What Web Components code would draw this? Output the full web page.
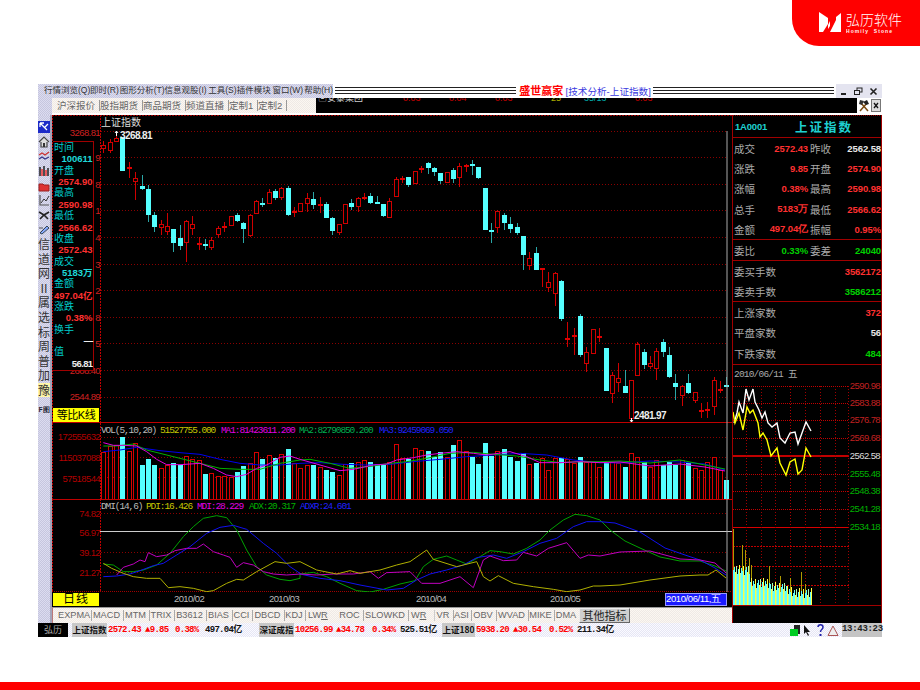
<!DOCTYPE html>
<html lang="zh"><head><meta charset="utf-8"><title>盛世赢家</title>
<style>html,body{margin:0;padding:0;background:#fff}</style></head>
<body>
<app-slide>
  <hs-logo slot="logo"></hs-logo>
  <hs-window slot="window"></hs-window>
</app-slide>
<script>
const CJK='"Liberation Sans","Noto Sans CJK SC",sans-serif';
const DITHER='repeating-conic-gradient(#dcdcf0 0 25%,#c6c6de 0 50%) 0 0/2px 2px';
const CREAM='repeating-conic-gradient(#fbf7f1 0 25%,#efe9e6 0 50%) 0 0/2px 2px';
const PALE='repeating-conic-gradient(#fafaff 0 25%,#e6e6f4 0 50%) 0 0/2px 2px';
function def(name,css,html,init){
  customElements.define(name,class extends HTMLElement{
    constructor(){super();const r=this.attachShadow({mode:'open'});r.innerHTML='<style>'+css+'</style>'+html;if(init)init(r,this);}
  });
}
/* ---------- data ---------- */
const CX=i=>103.4+6.356*i;
const C=[[141,145,148,153,'r'],[139,142,150,153,'r'],[131,138,141,141,'r'],[137,137,171,171,'c'],[162,167,169,178,'r'],[172,178,181,200,'r'],[175,186,189,190,'c'],[185,189,215,222,'c'],[212,215,227,232,'c'],[220,224,227,235,'r'],[213,226,231,235,'r'],[229,229,243,252,'c'],[225,238,246,250,'c'],[220,221,242,262,'r'],[216,224,228,235,'r'],[237,243,245,250,'r'],[239,244,245,250,'c'],[237,240,247,250,'r'],[226,228,234,238,'r'],[222,226,227,232,'r'],[216,216,225,225,'r'],[213,215,221,222,'c'],[222,223,229,243,'c'],[214,215,235,237,'r'],[200,201,213,214,'r'],[198,203,204,207,'c'],[189,192,203,203,'r'],[189,191,198,200,'c'],[187,188,197,200,'r'],[186,188,215,216,'c'],[207,211,213,217,'r'],[203,203,211,211,'r'],
[193,198,203,212,'r'],[192,199,205,209,'c'],[197,204,205,213,'r'],[202,204,218,218,'c'],[217,218,231,235,'c'],[224,224,232,235,'r'],[204,204,223,223,'r'],[199,203,207,210,'c'],[197,198,206,212,'r'],[193,197,198,200,'r'],[193,196,203,204,'c'],[196,202,203,204,'c'],[204,204,216,217,'c'],[198,201,217,218,'r'],[177,179,196,197,'r'],[176,178,179,183,'r'],[177,177,185,187,'c'],[171,171,183,184,'r'],[166,168,169,173,'r'],[162,163,168,174,'c'],[167,168,172,176,'c'],[173,173,181,184,'c'],[172,172,182,182,'r'],[168,170,179,183,'c'],[163,166,177,187,'r'],[164,165,166,172,'r'],[160,164,166,175,'c'],[167,167,178,179,'c'],[188,188,230,230,'c'],[223,230,231,243,'c'],[210,211,227,233,'r'],[213,215,223,230,'c'],[217,224,229,233,'c'],[223,227,233,235,'c'],[236,236,255,270,'c'],[252,258,265,270,'r'],[247,253,270,270,'c'],[268,268,270,287,'r'],[272,282,287,292,'r'],[272,273,293,306,'r'],[280,281,319,321,'c'],[322,338,339,347,'r'],[328,335,337,355,'r'],[314,316,355,357,'c'],[347,352,363,372,'r'],[329,329,353,353,'r'],[328,336,337,342,'r'],[348,348,391,391,'c'],[372,375,393,403,'r'],[363,378,382,392,'r'],[370,386,393,393,'c'],[380,380,418,418,'r'],[342,344,375,375,'r'],[349,352,365,369,'c'],[356,363,366,369,'r'],[348,351,368,380,'r'],[339,342,352,357,'c'],[347,355,377,378,'c'],[374,383,387,400,'c'],[385,386,395,406,'r'],[374,383,393,394,'c'],[392,392,400,403,'r'],[403,410,412,418,'r'],[402,409,411,418,'r'],[377,380,406,415,'r'],[381,389,390,393,'r'],[377,385,386,386,'c']];
const V=[95,78,75,52,92,68,135,118,135,143,135,128,135,108,118,120,163,160,168,168,172,155,138,130,95,118,105,115,103,88,130,143,135,135,140,150,155,165,133,130,125,120,127,132,132,125,72,115,118,83,90,92,112,97,112,76,61,93,110,132,70,108,93,88,110,122,100,132,130,115,150,115,113,118,130,110,125,125,142,130,125,130,140,100,110,125,140,120,135,125,135,120,130,145,150,125,110,150,180];
const pts=(a,b,tail)=>{const o=[];for(let i=0;i<a.length;i+=2)o.push((a[i]/3)+','+(420+a[i+1]/3));for(let i=0;i<b.length;i+=2)o.push((300+b[i]/3)+','+(420+b[i+1]/3));return o.join(' ')+' '+(tail||'');};
const t=(x,y,s,fill,o={})=>`<text x="${x}" y="${y}" fill="${fill}" text-anchor="${o.a||'start'}" class="${o.c||'s'}">${s}</text>`;
const grid=(ys,x1,x2,col='#8a0000')=>ys.map(y=>`<line x1="${x1}" x2="${x2}" y1="${y}" y2="${y}" stroke="${col}" stroke-dasharray="1 2" shape-rendering="crispEdges"/>`).join('');
const SVGCSS=`svg{display:block;overflow:visible}text{font-family:${CJK}}.s{font-size:9.5px;letter-spacing:-.6px}.m{font-family:"Liberation Mono",monospace;font-size:9.5px;letter-spacing:-1.1px}.w{font-size:10px;font-weight:bold;letter-spacing:-.6px}.z{font-size:10px}`;
/* ---------- shell ---------- */
def('app-slide',`:host{display:flex;flex-direction:column;width:920px;height:690px;background:#fff;overflow:hidden}
 .top{display:flex;justify-content:flex-end;height:46px}.mid{padding:38px 0 0 38px;flex:1}.foot{height:8px;background:#ff0000}`,
 `<div class="top"><slot name="logo"></slot></div><div class="mid"><slot name="window"></slot></div><div class="foot"></div>`);
def('hs-logo',`:host{display:block;width:128px;height:46px;background:#ff0000;border-bottom-left-radius:27px;color:#fff;position:relative}
 .box{display:flex;align-items:flex-start;gap:5px;padding:12px 0 0 27px}
 .n{font:14px/14px "Noto Sans CJK SC",sans-serif;letter-spacing:0;white-space:nowrap;font-weight:300}
 .e{font:bold 5px/6px "Liberation Sans",sans-serif;letter-spacing:1.05px;white-space:pre;margin-top:2px;opacity:.95}`,
 `<div class="box"><svg width="22" height="20" viewBox="0 0 22 20"><polygon fill="#fff" points="0,0 9,6 9,12 4,20 0,20"/><polygon fill="#fff" points="22,1 22,20 11,20 17,8 17,5"/><polygon fill="#fff" points="11,9 11,14 9,17 9,13"/></svg><div><div class="n">弘历软件</div><div class="e">Homily  Stone</div></div></div>`);
def('hs-window',`:host{display:block;width:844px;height:553px;font-family:${CJK}}
 .main{display:grid;grid-template-columns:14px 680px 150px;height:508px}
 .center{display:flex;flex-direction:column;min-width:0}`,
 `<hs-titlebar></hs-titlebar><hs-quicktabs></hs-quicktabs>
  <div class="main"><hs-rail></hs-rail><div class="center"><kline-panel></kline-panel><vol-panel></vol-panel><dmi-panel></dmi-panel><date-bar></date-bar><index-tabs></index-tabs></div><quote-panel></quote-panel></div>
  <ticker-bar></ticker-bar>`);
def('hs-titlebar',`:host{display:flex;height:14px;align-items:stretch;background:#fff;font-size:8.5px}
 .menu{width:295px;background:${DITHER};display:flex;color:#333;line-height:13px;white-space:nowrap;box-sizing:border-box;padding-left:6px}
 .menu span{display:block}
 .st{flex:1;margin:3px 2px 2px;background:repeating-linear-gradient(#222 0 1.5px,#fff 1.5px 3px)}
 .ti{white-space:nowrap;line-height:14px;padding-left:1px}.ti b{color:#f00;font-size:11px;letter-spacing:0}.ti i{font-style:normal;color:#3a3ae0;font-size:9.6px}
 .btn{width:44px;background:#e4e4f0;display:flex;justify-content:space-around;align-items:center;padding:0 1px}`,
 `<div class="menu"><span style="width:46px">行情浏览(Q)</span><span style="width:30px">即时(R)</span><span style="width:45px">图形分析(T)</span><span style="width:44px">信息观股(I)</span><span style="width:29px">工具(S)</span><span style="width:36px">插件模块</span><span style="width:32px">窗口(W)</span><span>帮助(H)</span></div>
  <div class="st"></div><div class="ti"><b>盛世赢家</b> <i>[技术分析-上证指数]</i></div><div class="st"></div>
  <div class="btn"><svg width="9" height="9"><rect x="1" y="6" width="5" height="2" fill="#222"/></svg><svg width="9" height="9" fill="none" stroke="#222"><rect x="3" y="1" width="5" height="4"/><rect x=".5" y="3.5" width="5" height="4" fill="#e4e4f0"/></svg><svg width="9" height="9" stroke="#222" stroke-width="1.6"><path d="M1.5 1.5 7.5 7.5M7.5 1.5 1.5 7.5"/></svg></div>`);
def('hs-quicktabs',`:host{display:flex;height:17px;background:#fff;box-sizing:border-box;font-size:9.5px}
 .l{width:14px;background:${DITHER}}
 .tabs{width:264px;height:15px;background:${CREAM};color:#666;display:flex;align-items:center;padding-left:5px;box-sizing:border-box;white-space:nowrap}
 .tabs span{display:block;width:38px;padding-right:4px;border-right:1px solid #999;margin-right:0;text-align:center;line-height:11px;box-sizing:content-box}
 .tabs span.n{width:24px}
 .blk{width:541px;height:15px;background:#000;overflow:hidden;display:grid;grid-template-columns:85px 46px 46px 56px 33px 51px 1fr;white-space:nowrap;line-height:11px;margin-top:0;padding-left:2px;box-sizing:border-box}
 .blk span{margin-top:-5px;font-size:9px}
 .ic{flex:1;display:flex;justify-content:space-between;padding:1px 1px 0 1px;height:14px}`,
 `<div class="l"></div><div class="tabs"><span>沪深报价</span><span>股指期货</span><span>商品期货</span><span>频道直播</span><span class="n">定制1</span><span class="n">定制2</span></div>
  <div class="blk"><span style="color:#ccc">▣安泰集团</span><span style="color:#c00">0.03</span><span style="color:#c00">0.04</span><span style="color:#c00">0.03</span><span style="color:#aa0">25</span><span style="color:#0aa">35/13</span><span style="color:#c00">0.03</span></div>
  <div class="ic"><svg width="12" height="13" viewBox="0 0 12 13"><path d="M2 12 9 4" stroke="#7a4a10" stroke-width="1.5"/><path d="M10 12 3 4" stroke="#7a4a10" stroke-width="1.5"/><path d="M5 3 9 1 11 5 8 6Z" fill="#222"/><path d="M1 5 2 1 6 2 4 6Z" fill="#333"/></svg><svg width="10" height="13" viewBox="0 0 10 13"><rect x=".5" y=".5" width="9" height="12" fill="#ddd" stroke="#777"/><path d="M3 4 7 9M7 4 3 9" stroke="#111" stroke-width="1.3"/></svg></div>`);
/* ---------- left rail ---------- */
const RI=[
 `<rect width="12" height="12" fill="#1c2ac8"/><path d="M2 2 9 9M2 2h4M2 2v4M10 3 7 6" stroke="#fff" stroke-width="1.3" fill="none"/>`,
 `<path d="M1 6 6 1 11 6M3 6v5h6V6" stroke="#444" fill="#ddd" stroke-width="1.2"/><rect x="5" y="7" width="2" height="4" fill="#333"/>`,
 `<path d="M1 5 4 3 7 5 11 2" stroke="#c33" stroke-width="1.3" fill="none"/><path d="M1 9 4 7 7 9 11 7" stroke="#338" stroke-width="1.2" fill="none"/>`,
 `<path d="M2 2v9M6 1v10M10 3v8" stroke="#222" stroke-width="1.5"/><path d="M4 4v7M8 5v6" stroke="#e33" stroke-width="1.5"/>`,
 `<path d="M1 4h4l1 1h5v6H1Z" fill="#d33" stroke="#922"/>`,
 `<path d="M2 1v10h9" stroke="#555" fill="none" stroke-width="1.2"/><path d="M3 9 6 5 8 7 11 2" stroke="#333" fill="none"/>`,
 `<path d="M1 3 6 6 11 3M2 10 6 6 10 10" stroke="#222" stroke-width="1.6" fill="none"/>`,
 `<path d="M2 10 9 3 11 5 4 11Z" fill="#8af" stroke="#345"/><path d="M1 5h4" stroke="#555"/>`];
def('hs-rail',`:host{display:block;background:${DITHER};box-sizing:border-box;padding-top:5px;border-right:2px solid #a4a4ba;height:508px}
 div{height:14.6px;width:12px;display:flex;align-items:center;justify-content:center;font-size:12px;line-height:14px;color:#333;font-family:"Noto Sans CJK SC",sans-serif}
 .y{background:#fff6a8}.f{font:bold 7px/14px "Liberation Mono",monospace;margin-top:5px;color:#223}`,
 RI.map(s=>`<div><svg width="12" height="12" viewBox="0 0 12 12">${s}</svg></div>`).join('')+
 ['信','道','网','II','属','选','标','周','普','加'].map(c=>`<div>${c}</div>`).join('')+`<div class="y">豫</div><div class="f">F图</div>`);
/* ---------- chart panels ---------- */
function candles(){
 let s='';C.forEach((c,i)=>{const x=Math.round(CX(i));const red=c[4]=='r';
  s+=`<line x1="${x+.5}" x2="${x+.5}" y1="${c[0]}" y2="${c[3]}" stroke="${red?'#d00000':'#2aa6a6'}"/>`;
  if(red){ if(c[2]-c[1]<=2) s+=`<rect x="${x-2}" y="${c[1]}" width="5" height="2" fill="#e00000"/>`;
    else s+=`<rect x="${x-1.5}" y="${c[1]+.5}" width="4" height="${c[2]-c[1]}" fill="#000" stroke="#d00000"/>`;}
  else s+=`<rect x="${x-2}" y="${c[1]}" width="5" height="${Math.max(2,c[2]-c[1])}" fill="#55ffff"/>`;
 });return s;}
const KY=[131,157.6,184.2,210.8,237.4,264,290.6,317.2,343.8,370.4,397];
def('kline-panel',`:host{display:block;position:relative;width:680px;height:308px;background:#000}${SVGCSS}
 .info{position:absolute;left:1px;top:26px;width:40px;height:228px;background:#000;border:1px solid #a00000;border-left:0;box-sizing:content-box;display:grid;grid-auto-rows:11.36px;font-size:10px;line-height:11px;color:#0cc}
 .info span{white-space:nowrap;padding-left:1px}.info .v{text-align:right;color:#ff3030;font-size:9.5px;font-weight:bold;padding-right:1px}
 .info .c{color:#1fd8d8}.info .w{color:#eee}
 .k{position:absolute;left:1px;bottom:1px;width:46px;height:14px;background:#ffff00;color:#000;font-size:11px;line-height:14px;text-align:center;letter-spacing:-.5px;box-shadow:inset 0 0 0 1px #ff0}`,
 `<svg width="680" height="308" viewBox="52 115 680 308">
  <line x1="100.5" x2="100.5" y1="115" y2="423" stroke="#c00000" stroke-dasharray="2 1" shape-rendering="crispEdges"/>
  <line x1="52.5" x2="52.5" y1="115" y2="423" stroke="#c00000" stroke-dasharray="2 1" shape-rendering="crispEdges"/>
  <line x1="52" x2="732" y1="115.5" y2="115.5" stroke="#a00000" stroke-dasharray="2 1" shape-rendering="crispEdges"/>
  <line x1="52" x2="732" y1="422.5" y2="422.5" stroke="#c00000" shape-rendering="crispEdges"/>
  ${grid(KY,101,727)}
  <g shape-rendering="crispEdges">${candles()}</g>
  ${t(101,126,'上证指数','#ddd',{c:'z'})}
  ${t(120,139,'3268.81','#eee',{c:'w'})}<path d="M116.5 131v5M115 133l1.5-2 1.5 2" stroke="#fff" fill="none"/>
  ${t(634,419,'2481.97','#eee',{c:'w'})}<path d="M631.5 422v-4M630 420l1.5 2 1.500-2" stroke="#fff" fill="none"/>
  ${t(100,136,'3268.81','#d02020',{a:'end'})}${t(100,400,'2544.89','#d02020',{a:'end'})}${t(100,374,'2608.40','#d02020',{a:'end'})}
  ${[[161,'9'],[188,'8'],[214,'1'],[241,'4'],[268,'3'],[294,'2'],[321,'8'],[347,'5']].map(a=>t(100,a[0],a[1],'#d02020',{a:'end'})).join('')}
  <line x1="727" x2="727" y1="131" y2="423" stroke="#aaa"/>
 </svg>
 <div class="info"><span>时间</span><span class="v c">100611</span><span>开盘</span><span class="v">2574.90</span><span>最高</span><span class="v">2590.98</span><span>最低</span><span class="v">2566.62</span><span>收盘</span><span class="v">2572.43</span><span>成交</span><span class="v c">5183万</span><span>金额</span><span class="v">497.04亿</span><span>涨跌</span><span class="v">0.38%</span><span>换手</span><span class="v w">—</span><span>值</span><span class="v w">56.81</span></div>
 <div class="k">等比K线</div>`);
function volBars(){let s='';V.forEach((v,i)=>{const y=Math.round(420+v/3),x=Math.round(CX(i));
 s+=C[i][4]=='c'?`<rect x="${x-2}" y="${y}" width="5" height="${499-y}" fill="#55ffff"/>`:`<rect x="${x-1.5}" y="${y+.5}" width="4" height="${499-y}" fill="#000" stroke="#d80000"/>`;});return s;}
def('vol-panel',`:host{display:block;width:680px;height:76px;background:#000}${SVGCSS}`,
 `<svg width="680" height="76" viewBox="52 423 680 76">
  <line x1="100.5" x2="100.5" y1="423" y2="499" stroke="#c00000" stroke-dasharray="2 1" shape-rendering="crispEdges"/><line x1="52.5" x2="52.5" y1="423" y2="499" stroke="#c00000" stroke-dasharray="2 1" shape-rendering="crispEdges"/>
  ${grid([437,457,477],101,727)}
  <g shape-rendering="crispEdges">${volBars()}</g>
  <polyline fill="none" stroke="#0000ee" points="${pts([310,95,360,90,410,82,480,92,540,98,600,103,660,118,720,130,780,135,840,135,900,130],[60,128,130,133,200,135,270,133,340,125,420,118,500,110,580,105,660,100,740,105,820,120,900,128],'620,463 650,461 680,462 705,464 725,470')}"/>
  <polyline fill="none" stroke="#00b000" points="${pts([310,78,350,78,400,72,440,90,480,100,540,115,600,130,660,145,720,148,780,148,840,130,900,120],[30,118,90,130,150,145,220,138,270,130,320,125,380,115,450,100,520,97,580,103,650,108,720,120,780,128,840,125,900,125],'620,461 650,463 680,460 705,465 725,469')}"/>
  <polyline fill="none" stroke="#e000e0" points="${pts([310,68,340,76,370,76,410,78,440,95,470,118,500,134,540,134,600,130,640,145,680,165,710,170,740,163,770,145,800,135,840,112,870,108,900,118],[0,118,60,135,120,152,160,148,220,135,260,132,290,120,340,113,380,105,420,100,470,95,520,100,560,105,630,95,680,110,720,128,780,128,840,125,900,128],'620,462 650,466 680,464 705,467 725,471')}"/>
  <line x1="727" x2="727" y1="423" y2="499" stroke="#aaa"/>
  <rect x="724" y="480" width="5" height="19" fill="#55ffff"/><line x1="726.500" x2="726.500" y1="480" y2="499" stroke="#8ab"/>
  ${t(100,440,'172555632','#b00000',{a:'end'})}${t(100,461,'115037088','#b00000',{a:'end'})}${t(100,482,'57518544','#b00000',{a:'end'})}
  ${t(101,433,'VOL(5,10,20)','#bbb',{c:'m'})}${t(160,433,'51527755.000','#c8c800',{c:'m'})}${t(221,433,'MA1:81423611.200','#e000e0',{c:'m'})}${t(299,433,'MA2:82790850.200','#00b050',{c:'m'})}${t(379,433,'MA3:92459069.050','#2020ff',{c:'m'})}
 </svg>`);
def('dmi-panel',`:host{display:block;width:680px;height:93px;background:#000}${SVGCSS}`,
 `<svg width="680" height="93" viewBox="52 499 680 93">
  <line x1="52" x2="732" y1="499.5" y2="499.500" stroke="#c00000" shape-rendering="crispEdges"/>
  <line x1="100.5" x2="100.5" y1="499" y2="592" stroke="#c00000" stroke-dasharray="2 1" shape-rendering="crispEdges"/><line x1="52.5" x2="52.5" y1="499" y2="592" stroke="#c00000" stroke-dasharray="2 1" shape-rendering="crispEdges"/>
  ${grid([513.500,552.500,572.500],101,727)}
  <line x1="52" x2="732" y1="591.5" y2="591.5" stroke="#a00000" stroke-dasharray="1 1" shape-rendering="crispEdges"/>
  <line x1="100" x2="732" y1="531.5" y2="531.5" stroke="#ccc" shape-rendering="crispEdges"/>
  <polyline fill="none" stroke="#00a000" points="${pts([310,432,340,435,370,455,400,455,430,450,470,435,510,400,550,350,580,320,610,295,650,287,680,293,710,330,740,390,770,440,800,465,840,478,870,482,900,475],[0,462,40,457,80,470,120,490,170,512,210,516,250,508,300,492,345,482,370,440,400,418,440,408,470,420,500,432,540,410,570,392,600,395,640,402,680,385,720,360,750,330,790,300,825,283,860,287,900,300],'610,530 625,541 640,548 660,557 680,561 700,561 715,566 726,571')}"/>
  <polyline fill="none" stroke="#1010f0" points="${pts([310,470,350,468,390,462,420,452,460,437,490,430,530,405,570,380,620,340,660,322,700,316,740,328,790,370,830,400,870,440,900,460],[0,462,60,475,120,482,180,495,260,510,310,505,350,480,390,462,440,450,490,435,530,413,580,405,620,415,670,395,720,370,770,355,820,320,860,305,900,305],'615,523 640,532 665,548 685,555 700,560 715,568 726,575')}"/>
  <polyline fill="none" stroke="#c000c0" points="${pts([350,465,370,442,400,432,420,420,435,425,445,398,470,410,500,405,525,392,560,385,590,385,610,372,640,395,670,405,690,412,710,442,730,428,760,435,790,455,820,462,860,465,900,462],[0,462,50,465,100,462,160,462,210,455,235,475,260,458,330,455,365,490,420,490,480,470,520,503,550,420,570,408,610,422,650,420,670,397,710,408,745,385,800,368,840,415,865,405,900,408],'620,552 650,551 680,559 700,560 715,563 726,573')}"/>
  <polyline fill="none" stroke="#b0b000" points="${pts([310,430,335,445,370,460,400,470,440,475,480,475,505,503,540,500,580,505,620,515,640,512,680,490,710,478,730,480,770,455,825,425,860,430,900,425],[0,425,50,450,110,462,150,452,180,460,240,450,290,435,330,425,380,390,400,418,470,440,530,425,550,470,570,483,595,467,640,490,700,500,760,508,800,515,840,510,880,498,900,498],'620,585 650,580 680,576 700,575 708,575 716,570 726,578')}"/>
  <line x1="727" x2="727" y1="499" y2="592" stroke="#aaa"/>
  ${t(100,517,'74.82','#b00000',{a:'end'})}${t(100,536,'56.97','#b00000',{a:'end'})}${t(100,556,'39.12','#b00000',{a:'end'})}${t(100,576,'21.27','#b00000',{a:'end'})}
  ${t(101,509,'DMI(14,6)','#bbb',{c:'m'})}${t(146,509,'PDI:16.426','#c8c800',{c:'m'})}${t(197,509,'MDI:28.229','#e000e0',{c:'m'})}${t(249,509,'ADX:20.317','#00b000',{c:'m'})}${t(300,509,'ADXR:24.601','#2020ff',{c:'m'})}
 </svg>`);
def('date-bar',`:host{display:grid;grid-template-columns:48px 1fr;width:680px;height:15px;background:#000;box-sizing:border-box;position:relative}
 .d{display:block;width:46px;height:13px;margin:1px;background:#ff0;color:#000;font-size:12px;line-height:13px;text-align:center;letter-spacing:1px}
 .r{display:grid;grid-template-columns:74px 95px 147px 134px 115px 1fr;color:#bbb;font:9.5px/14px "Liberation Sans",sans-serif;letter-spacing:-.6px;white-space:nowrap}
 .b{background:#1a1aff;color:#fff;height:13px;line-height:12px;margin:1px 0 0;border:0;outline:1px solid #99f;outline-offset:-1px;padding:0 1px;letter-spacing:-.4px;width:62px;box-sizing:border-box}`,
 `<div class="d">日线</div><div class="r"><span></span><span>2010/02</span><span>2010/03</span><span>2010/04</span><span>2010/05</span><span class="b">2010/06/11,五</span></div>`);
def('index-tabs',`:host{display:flex;width:680px;height:16px;background:${CREAM};box-sizing:border-box;font:9.2px/15px "Liberation Sans","Noto Sans CJK SC",sans-serif;color:#666;border-left:1px solid #b77;padding-left:5px;white-space:nowrap;border-top:1px solid #999;align-items:stretch}
 span{display:block;box-sizing:border-box;border-right:1px solid #aaa;height:11px;line-height:11px;margin-top:2px;text-align:center;padding-right:2px}
 u{text-decoration:underline}
 .e{text-align:left;padding-left:2px}
 .o{margin:0;height:15px;line-height:14px;border:1px solid;border-color:#eee #666 #666 #eee;background:#cfcfcf;color:#222;font-size:11px;width:51px;padding:0;text-align:center}`,
 `<span style="width:34px">EXPMA</span><span style="width:32px">MACD</span><span style="width:26px">MTM</span><span style="width:25px">TRIX</span><span style="width:32px">B3612</span><span style="width:26px">BIAS</span><span style="width:20px">CCI</span><span style="width:32px">DBCD</span><span style="width:21px">KDJ</span><span class="e" style="width:32px;border:0">LW<u>R</u></span><span style="width:26px">ROC</span><span style="width:45px">SLOWKD</span><span class="e" style="width:26px;border-right-color:#ccc">W<u>R</u></span><span style="width:19px">VR</span><span style="width:18px">ASI</span><span style="width:25px">OBV</span><span style="width:32px">WVAD</span><span style="width:26px">MIKE</span><span style="width:24px;border:0">DMA</span><span class="o">其他指标</span>`);
/* ---------- right panel ---------- */
def('q-cell',`:host{display:flex;justify-content:space-between;align-items:center;font-size:10.5px;color:#aaa;white-space:nowrap;padding:0 1px}
 b{font:9.5px "Liberation Sans",sans-serif;font-weight:bold;color:var(--c,#eee);letter-spacing:-.1px}`,
 `<slot></slot><b><slot name="v"></slot></b>`);
def('q-sec',`:host{display:grid;grid-template-columns:76px 73px;border-bottom:1px solid #a00000;box-sizing:border-box;align-items:center}:host([wide]){grid-template-columns:149px}`,`<slot></slot>`);
const qc=(l,v,c)=>`<q-cell style="--c:${c}">${l}<span slot="v">${v}</span></q-cell>`;
const UP='#ff3030',DN='#00d000',WH='#e8e8e8';
function miniBars(){let s='';const PK={0:76,9:60,12:55,16:47,18:40,36:39,47:29,57:27,68:33,72:21};
 const jit=[0,3,-2,4,-4,1,5,-3,2,-1,4,-5];
 for(let x=733;x<=811;x++){const k=x-733;
  let h=(k<17?35:k<37?22:k<54?18:k<60?14:12)+jit[k%12];
  if(PK[k])s+=`<rect x="${x}" y="${605-PK[k]}" width="1" height="${PK[k]}" fill="#b09a00"/>`;
  s+=`<rect x="${x}" y="${605-h}" width="1" height="${h}" fill="${k%4<2?'#60ffff':(k%4==2?'#ffff40':'#a8ffb0')}"/>`;}return s;}
const LB=[[389,'2590.98','#c02020'],[406,'2583.88','#c02020'],[423,'2576.78','#c02020'],[441,'2569.68','#c02020'],[459,'2562.58','#ddd'],[477,'2555.48','#00b000'],[494,'2548.38','#00b000'],[512,'2541.28','#00b000'],[530,'2534.18','#00b000']];
def('quote-panel',`:host{display:block;width:150px;height:508px;background:#000;border-left:1px solid #a00000;border-top:1px dotted #a00000;border-right:1px solid #a00000;box-sizing:border-box;position:relative;overflow:hidden}${SVGCSS}
 .h{display:flex;align-items:center;height:22px;border-bottom:1px solid #a00000;box-sizing:border-box;color:#1fd0d0;padding-left:2px}
 .h i{font:9.5px "Liberation Sans",sans-serif;font-weight:bold;letter-spacing:-.2px;width:60px}.h b{font-size:12.500px;letter-spacing:2px;font-weight:bold}
 .dt{color:#aaa;font:9.5px/19px "Liberation Mono","Noto Sans CJK SC",monospace;letter-spacing:-.8px;height:20px;padding-left:1px;white-space:nowrap}
 q-sec.a{height:102px;grid-auto-rows:20.4px}q-sec.b{height:21px}q-sec.c{height:41px;grid-auto-rows:20.5px}q-sec.d{height:63px;grid-auto-rows:20.5px}`,
 `<div class="h"><i>1A0001</i><b>上证指数</b></div>
 <q-sec class="a">${qc('成交','2572.43',UP)}${qc('昨收','2562.58',WH)}${qc('涨跌','9.85',UP)}${qc('开盘','2574.90',UP)}${qc('涨幅','0.38%',UP)}${qc('最高','2590.98',UP)}${qc('总手','5183万',UP)}${qc('最低','2566.62',UP)}${qc('金额','497.04亿',UP)}${qc('振幅','0.95%',UP)}</q-sec>
 <q-sec class="b">${qc('委比','0.33%',DN)}${qc('委差','24040',DN)}</q-sec>
 <q-sec class="c" wide>${qc('委买手数','3562172',UP)}${qc('委卖手数','3586212',DN)}</q-sec>
 <q-sec class="d" wide>${qc('上涨家数','372',UP)}${qc('平盘家数','56',WH)}${qc('下跌家数','484',DN)}</q-sec>
 <div class="dt">2010/06/11 五</div>
 <svg width="148" height="237" viewBox="733 385 148 237">
  ${[386,403,420,438,474,491.500,509,546.500,566,585].map(y=>`<line x1="733" x2="849" y1="${y}" y2="${y}" stroke="#c00000" stroke-dasharray="${y>530?'2 1':'1 1'}" shape-rendering="crispEdges"/>`).join('')}
  <line x1="733" x2="849" y1="455.500" y2="455.500" stroke="#c00000" stroke-width="2" shape-rendering="crispEdges"/>
  <line x1="733" x2="849" y1="527.500" y2="527.500" stroke="#d80000" shape-rendering="crispEdges"/>
  ${[746.500,761.500,775.500,805.500,820.500,835.500,848.500].map(x=>`<line x1="${x}" x2="${x}" y1="386" y2="605" stroke="#a00000" stroke-dasharray="1 2" shape-rendering="crispEdges"/>`).join('')}
  <line x1="790.500" x2="790.500" y1="386" y2="605" stroke="#b00000" stroke-dasharray="1 2" shape-rendering="crispEdges"/>
  <line x1="733" x2="881" y1="605.500" y2="605.500" stroke="#a00000" shape-rendering="crispEdges"/>
  <polyline fill="none" stroke="#fff" stroke-width="1.4" points="734,423 737,413 739,402 743,413 746,389 749,400 753,389 755,402 759,410 762,418 765,412 768,423 772,427 777,423 780,438 785,443 790,433 795,432 798,444 802,433 806,422 811,431"/>
  <polyline fill="none" stroke="#ffff00" stroke-width="1.4" points="733,412 735,423 739,413 743,430 747,407 750,413 753,410 758,423 760,437 763,433 767,440 771,456 777,448 780,463 786,475 790,462 795,459 798,474 802,470 806,448 811,457"/>
  <g shape-rendering="crispEdges">${miniBars()}</g>
  ${LB.map(a=>`<text x="880" y="${a[0]}" fill="${a[2]}" text-anchor="end" class="s">${a[1]}</text>`).join('')}
 </svg>`);
/* ---------- ticker ---------- */
def('ticker-bar',`:host{display:flex;height:14px;background:${PALE};font:bold 9px/13px "Liberation Mono","Noto Sans CJK SC",monospace;letter-spacing:-.7px;white-space:nowrap;align-items:stretch}
 .h{width:30px;background:#000;color:#aaa;font:9px/13px "Noto Sans CJK SC",sans-serif;text-align:center;letter-spacing:0;margin-right:4px}
 .t{background:#c8c8c8;color:#111;font:bold 8.500px/13px "Noto Sans CJK SC",sans-serif;letter-spacing:0;text-align:center}
 .r{color:#f00}.k{color:#111}
 .g{display:grid;align-items:center;margin-left:1px}
 .ic{margin-left:auto;display:flex;align-items:center;gap:1px;padding:0 3px 0 2px}
 .tm{width:40px;background:#c4c4c4;color:#222;text-align:center;letter-spacing:-.3px;font-weight:bold}`,
 (()=>{const g=(n,w,cols,a,b,c,d,ml)=>`<span class="t" style="margin-left:${ml}px;width:${w}px">${n}</span><span class="g" style="grid-template-columns:${cols}"><span class="r">${a}</span><span class="r">▲${b}</span><span class="r">${c}</span><span class="k">${d}</span></span>`;
  return `<span class="h">弘历</span>`+g('上证指数',35,'37px 30px 30px 36px','2572.43','9.85','0.38%','497.04亿',0)+g('深证成指',35,'41px 36px 28px 37px','10256.99','34.78','0.34%','525.51亿',18)+g('上证180',33,'37px 36px 28px 36px','5938.20','30.54','0.52%','211.34亿',5)+
  `<span class="ic"><svg width="14" height="13" viewBox="0 0 14 13"><rect x="6" y="1" width="6" height="9" fill="#222"/><rect x="2" y="5" width="8" height="7" fill="#0c2"/></svg><svg width="13" height="13" viewBox="0 0 13 13"><path d="M1 1v9l2-2 2 4 1-1-2-3h3Z" fill="#111"/></svg><svg width="7" height="13" viewBox="0 0 7 13"><path d="M1 3C1 0 6 0 6 3 6 6 3.500 5 3.500 8" fill="none" stroke="#22a" stroke-width="1.5"/><rect x="2.500" y="10" width="2" height="2" fill="#22a"/></svg><svg width="12" height="13" viewBox="0 0 12 13" style="margin-left:2px"><path d="M6 2 11 11.500H1Z" fill="#eee" stroke="#a55"/></svg></span><span class="tm">13:43:23</span>`;})());
</script>
</body></html>
